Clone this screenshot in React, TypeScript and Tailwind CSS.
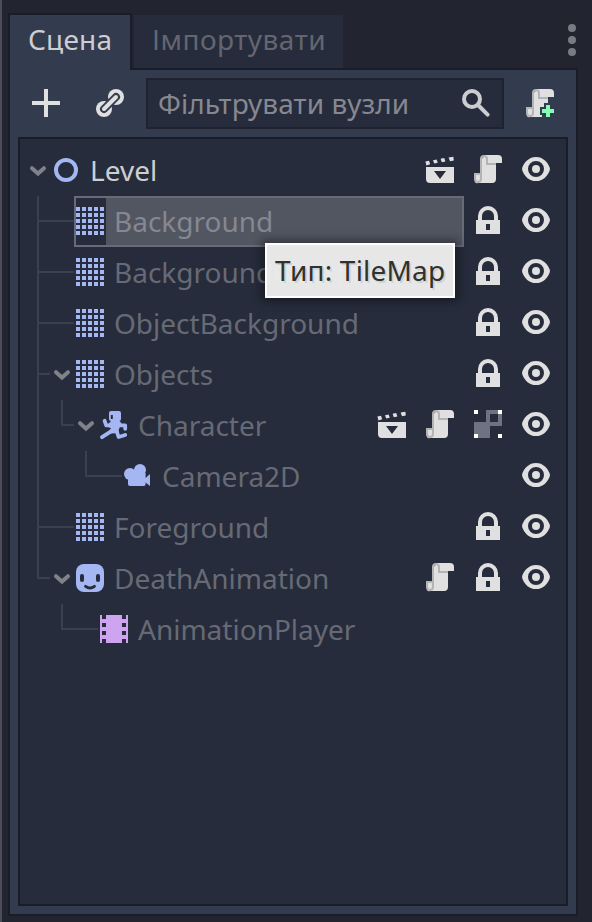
import type { ReactNode } from "react";

type GuideKind = "tee" | "elbow" | "line" | "dash" | "blank";
type ActionKind = "scene" | "script" | "lock" | "group" | "eye";

interface TreeNode {
  name: string;
  guides: GuideKind[];
  open?: boolean;
  icon: ReactNode;
  actions: ActionKind[];
  root?: boolean;
  selected?: boolean;
}

function Icon({ children, className = "" }: { children: ReactNode; className?: string }) {
  return (
    <svg viewBox="0 0 16 16" className={`block size-8 shrink-0 ${className}`} fill="#e0e0e0">
      {children}
    </svg>
  );
}

const scriptShade =
  "M6 1a2 2 0 0 0-2 2v7H1v3a2 2 0 0 0 4 0V3a1 1 0 0 1 2 0v3h5V5H8V3a2 2 0 0 0-2-2zM2 11h2v2a1 1 0 0 1-2 0z";

function ScriptIcon() {
  return (
    <Icon>
      <path d="M6 1v1a1 1 0 0 0-1 1v10H4v-2H2v2a1 1 0 0 0 1 2h7a2 2 0 0 0 2-2V5h3V3a2 2 0 0 0-2-2z" />
      <path d={scriptShade} fill="#b4b4b4" />
    </Icon>
  );
}

function ScriptAddIcon() {
  return (
    <Icon>
      <path d="M6 1v1a1 1 0 0 0-1 1v10H4v-2H2v2a1 1 0 0 0 1 2h6v-1H8v-4h2V8h2V5h3V3a2 2 0 0 0-2-2z" />
      <path d={scriptShade} fill="#b4b4b4" />
      <path d="M11 9v2H9v2h2v2h2v-2h2v-2h-2V9z" fill="#84ffb1" />
    </Icon>
  );
}

function SceneIcon() {
  return (
    <Icon>
      <path d="M1 7h14v8H3a2 2 0 0 1-2-2zM5 9l3 4 3-4z" fillRule="evenodd" />
      <path d="M.7 4.3l1.8-.4.6 1.7-1.9.6zM4.5 3.6l1.8-.4.6 1.7-1.8.4zM8.3 2.9l1.8-.4.6 1.7-1.8.4zM12.3 2.3l2.4-.4.2 1.8-1.9.4z" />
    </Icon>
  );
}

function LockIcon() {
  return (
    <Icon>
      <path
        fillRule="evenodd"
        d="M8 1a5 5 0 0 0-5 5v2H2v7h12V8h-1V6a5 5 0 0 0-5-5zm0 2a3 3 0 0 1 3 3v2H5V6a3 3 0 0 1 3-3zM7 10h2v3H7z"
      />
    </Icon>
  );
}

function EyeIcon() {
  return (
    <Icon>
      <path
        fillRule="evenodd"
        d="M8 2C4.5 2 2.2 4.500 1.150 7.300Q.9 8 1.150 8.700C2.200 11.500 4.500 14 8 14s5.800-2.500 6.850-5.300q.25-.7 0-1.400C13.800 4.500 11.500 2 8 2zm0 2a4 4 0 0 1 0 8 4 4 0 0 1 0-8z"
      />
      <circle cx="8" cy="8" r="2" />
    </Icon>
  );
}

function GroupIcon() {
  return (
    <Icon>
      <path d="M7 1h8v8H9v6H1V7h6zM9 3v4h4V3z" fill="#6f7280" fillRule="evenodd" />
      <path d="M1 1h2v2H1zM13 1h2v2h-2zM1 13h2v2H1zM13 13h2v2h-2z" fill="#fff" />
    </Icon>
  );
}

function TileMapIcon() {
  const steps = [1, 4, 7, 10, 13];
  return (
    <Icon>
      {steps.map((y) =>
        steps.map((x) => (
          <rect key={`${x}-${y}`} x={x} y={y} width="2" height="2" fill="#a5b7f3" />
        )),
      )}
    </Icon>
  );
}

function CharacterIcon() {
  return (
    <Icon>
      <path
        fillRule="evenodd"
        fill="#a5b7f3"
        d="M6.500 1h4a1 1 0 0 1 1 1v3a1 1 0 0 1-1 1h-4a1 1 0 0 1-1-1V2a1 1 0 0 1 1-1zM6.400 3v2h1V3z"
      />
      <g fill="none" stroke="#a5b7f3" strokeWidth="1.900" strokeLinecap="round" strokeLinejoin="round">
        <path d="M3.300 5.900l.8 2.300h3" />
        <path d="M10.200 6.800l1.200 1.400h2.200v1.700" />
        <path d="M7.500 10.600l-5.500 3.500" />
        <path d="M9.200 10.700l1.100 3.300 3.300-1" />
      </g>
      <path d="M6.500 6h4l1 1.700-1.200 2.800.2 1.500-4 .3-.9-1.600 1-1.200-1.200-.3V7.200z" fill="#a5b7f3" />
    </Icon>
  );
}

const tileMap = <TileMapIcon />;

const nodes: TreeNode[] = [
  {
    name: "Level",
    guides: [],
    open: true,
    root: true,
    icon: (
      <Icon>
        <circle cx="8" cy="8" r="5" fill="none" stroke="#a5b7f3" strokeWidth="2" />
      </Icon>
    ),
    actions: ["scene", "script", "eye"],
  },
  { name: "Background", guides: ["tee", "dash"], icon: tileMap, actions: ["lock", "eye"], selected: true },
  { name: "BackgroundOverlay", guides: ["tee", "dash"], icon: tileMap, actions: ["lock", "eye"] },
  { name: "ObjectBackground", guides: ["tee", "dash"], icon: tileMap, actions: ["lock", "eye"] },
  { name: "Objects", guides: ["tee"], open: true, icon: tileMap, actions: ["lock", "eye"] },
  {
    name: "Character",
    guides: ["line", "elbow"],
    open: true,
    icon: <CharacterIcon />,
    actions: ["scene", "script", "group", "eye"],
  },
  {
    name: "Camera2D",
    guides: ["line", "blank", "elbow", "dash"],
    icon: (
      <Icon>
        <g fill="#a5b7f3">
          <circle cx="9" cy="5" r="3" />
          <circle cx="4" cy="7" r="3" />
          <path d="M4 5h4l3.800 1.500V9L14 7v6l-2.200-1.800V12a1 1 0 0 1-1 1H4a1 1 0 0 1-1-1V7z" />
        </g>
      </Icon>
    ),
    actions: ["eye"],
  },
  { name: "Foreground", guides: ["tee", "dash"], icon: tileMap, actions: ["lock", "eye"] },
  {
    name: "DeathAnimation",
    guides: ["elbow"],
    open: true,
    icon: (
      <Icon>
        <rect x="1" y="1" width="14" height="14" rx="4" fill="#a5b7f3" />
        <rect x="3" y="6" width="2" height="4" rx="1" fill="#262c3b" />
        <rect x="11" y="6" width="2" height="4" rx="1" fill="#262c3b" />
        <path d="M5.800 12.200q2.200 1.600 4.400 0" fill="none" stroke="#262c3b" strokeWidth="1.500" strokeLinecap="round" />
      </Icon>
    ),
    actions: ["script", "lock", "eye"],
  },
  {
    name: "AnimationPlayer",
    guides: ["blank", "elbow", "dash"],
    icon: (
      <Icon>
        <path
          fill="#cea4f1"
          fillRule="evenodd"
          d="M1 1h14v14H1zM2 1v2h2V1zM2 5v2h2V5zM2 9v2h2V9zM2 13v2h2v-2zM12 1v2h2V1zM12 5v2h2V5zM12 9v2h2V9zM12 13v2h2v-2z"
        />
      </Icon>
    ),
    actions: [],
  },
];

function Guide({ kind }: { kind: GuideKind }) {
  if (kind === "dash") return <div className="mt-6 h-0.5 w-6 shrink-0 bg-[#3b404e]" />;
  if (kind === "blank") return <div className="w-6 shrink-0" />;
  if (kind === "line") return <div className="ml-[11px] w-[13px] shrink-0 border-l-2 border-[#3b404e]" />;
  return (
    <div className="ml-[11px] flex w-[13px] shrink-0 flex-col">
      <div className="h-[26px] border-b-2 border-l-2 border-[#3b404e]" />
      {kind === "tee" && <div className="flex-1 border-l-2 border-[#3b404e]" />}
    </div>
  );
}

function Action({ kind }: { kind: ActionKind }) {
  switch (kind) {
    case "scene":
      return <SceneIcon />;
    case "script":
      return <ScriptIcon />;
    case "lock":
      return <LockIcon />;
    case "group":
      return <GroupIcon />;
    default:
      return <EyeIcon />;
  }
}

function Row({ node }: { node: TreeNode }) {
  const box = node.selected
    ? "outline-2 -outline-offset-2 outline-[#666a79] bg-[#525661] text-[#858892]"
    : node.root
      ? "text-[#cdced2]"
      : "text-[#676a74]";
  return (
    <div className="flex h-[51px] pr-[14px] pl-1.5">
      {node.guides.map((kind, i) => (
        <Guide key={i} kind={kind} />
      ))}
      {node.open && (
        <svg viewBox="0 0 24 51" className="block h-[51px] w-6 shrink-0">
          <path d="M6 23.200l6 5.300 6-5.300" fill="none" stroke="#808289" strokeWidth="4" strokeLinecap="round" />
        </svg>
      )}
      <div className={`flex min-w-0 flex-1 ${box}`}>
        <div className={`h-[51px] shrink-0 pt-[9px] ${node.selected ? "bg-[#262c3b]" : ""}`}>{node.icon}</div>
        <span className="mt-2 ml-2 h-8 whitespace-nowrap leading-[34px]">{node.name}</span>
      </div>
      <div className={`flex gap-4 pt-2 ${node.selected ? "pl-2" : ""}`}>
        {node.actions.map((kind) => (
          <Action key={kind} kind={kind} />
        ))}
      </div>
    </div>
  );
}

function Tooltip() {
  return (
    <div className="absolute top-[243px] left-[263px] flex h-[55px] w-[190px] items-center border-2 border-white bg-[#ededed]/97 bg-clip-padding pb-0.5 pl-2 tracking-[0.2px] whitespace-nowrap text-[#30322c] shadow-[0_0_8px_4px_rgba(0,0,0,0.35)] [text-shadow:2px_2px_0_rgba(0,0,0,0.1)]">
      Тип: TileMap
    </div>
  );
}

export default function App() {
  return (
    <div className="relative flex h-[922px] w-[592px] flex-col overflow-hidden border-l-2 border-[#4b4e57] bg-[#22252f] pl-1.5 font-['Noto_Sans',sans-serif] text-[28px] leading-[38px]">
      <div className="flex h-[70px] shrink-0 items-end">
        <div className="z-10 flex h-[57px] w-[124px] border-x-2 border-t-2 border-[#191d27] bg-[#333b4f] pt-[5px] pl-[18px] tracking-[0.2px] text-[#cdced2]">
          Сцена
        </div>
        <div className="flex h-[57px] w-[446px] items-start border-b-2 border-[#191d27]">
          <div className="mt-0.5 ml-0.5 h-[53px] w-[209px] bg-[#262c3b] pt-[5px] pl-[18px] tracking-[0.5px] whitespace-nowrap text-[#636670]">
            Імпортувати
          </div>
          <svg viewBox="0 0 8 32" className="mt-[11px] mr-0.5 ml-auto block h-8 w-2" fill="#797b83">
            <circle cx="4" cy="4" r="4" />
            <circle cx="4" cy="16" r="4" />
            <circle cx="4" cy="28" r="4" />
          </svg>
        </div>
      </div>

      <div className="flex h-[846px] w-[570px] shrink-0 flex-col border-x-2 border-b-2 border-[#191d27] bg-[#333b4f] px-2 pb-2">
        <div className="flex h-[67px] shrink-0 items-start pt-2">
          <Icon className="mt-[9px] ml-3">
            <path d="M7 1v6H1v2h6v6h2V9h6V7H9V1z" />
          </Icon>
          <Icon className="mt-[9px] ml-8">
            <circle cx="11" cy="5" r="4" />
            <circle cx="5" cy="11" r="4" />
            <path d="M5 11l6-6" stroke="#333b4f" strokeWidth="4" strokeLinecap="round" />
            <path d="M5 11l6-6" stroke="#e0e0e0" strokeWidth="2" strokeLinecap="round" />
          </Icon>
          <div className="ml-5 flex h-[51px] w-[358px] border-2 border-[#1f2330] bg-[#262c3b] pt-1 pr-2.5 pl-2.5 tracking-[0.1px] whitespace-nowrap text-[#868891]">
            Фільтрувати вузли
            <Icon className="mt-[3px] ml-auto">
              <circle cx="6" cy="6" r="4" fill="none" stroke="#cccdd1" strokeWidth="2" />
              <path d="M9 9l4.800 4.800" stroke="#cccdd1" strokeWidth="2" strokeLinecap="round" />
            </Icon>
          </div>
          <div className="mt-[9px] ml-5">
            <ScriptAddIcon />
          </div>
        </div>

        <div className="flex-1 border-2 border-[#191d27] bg-[#262c3b] pt-1.5">
          {nodes.map((node) => (
            <Row key={node.name} node={node} />
          ))}
        </div>
      </div>

      <Tooltip />
    </div>
  );
}
